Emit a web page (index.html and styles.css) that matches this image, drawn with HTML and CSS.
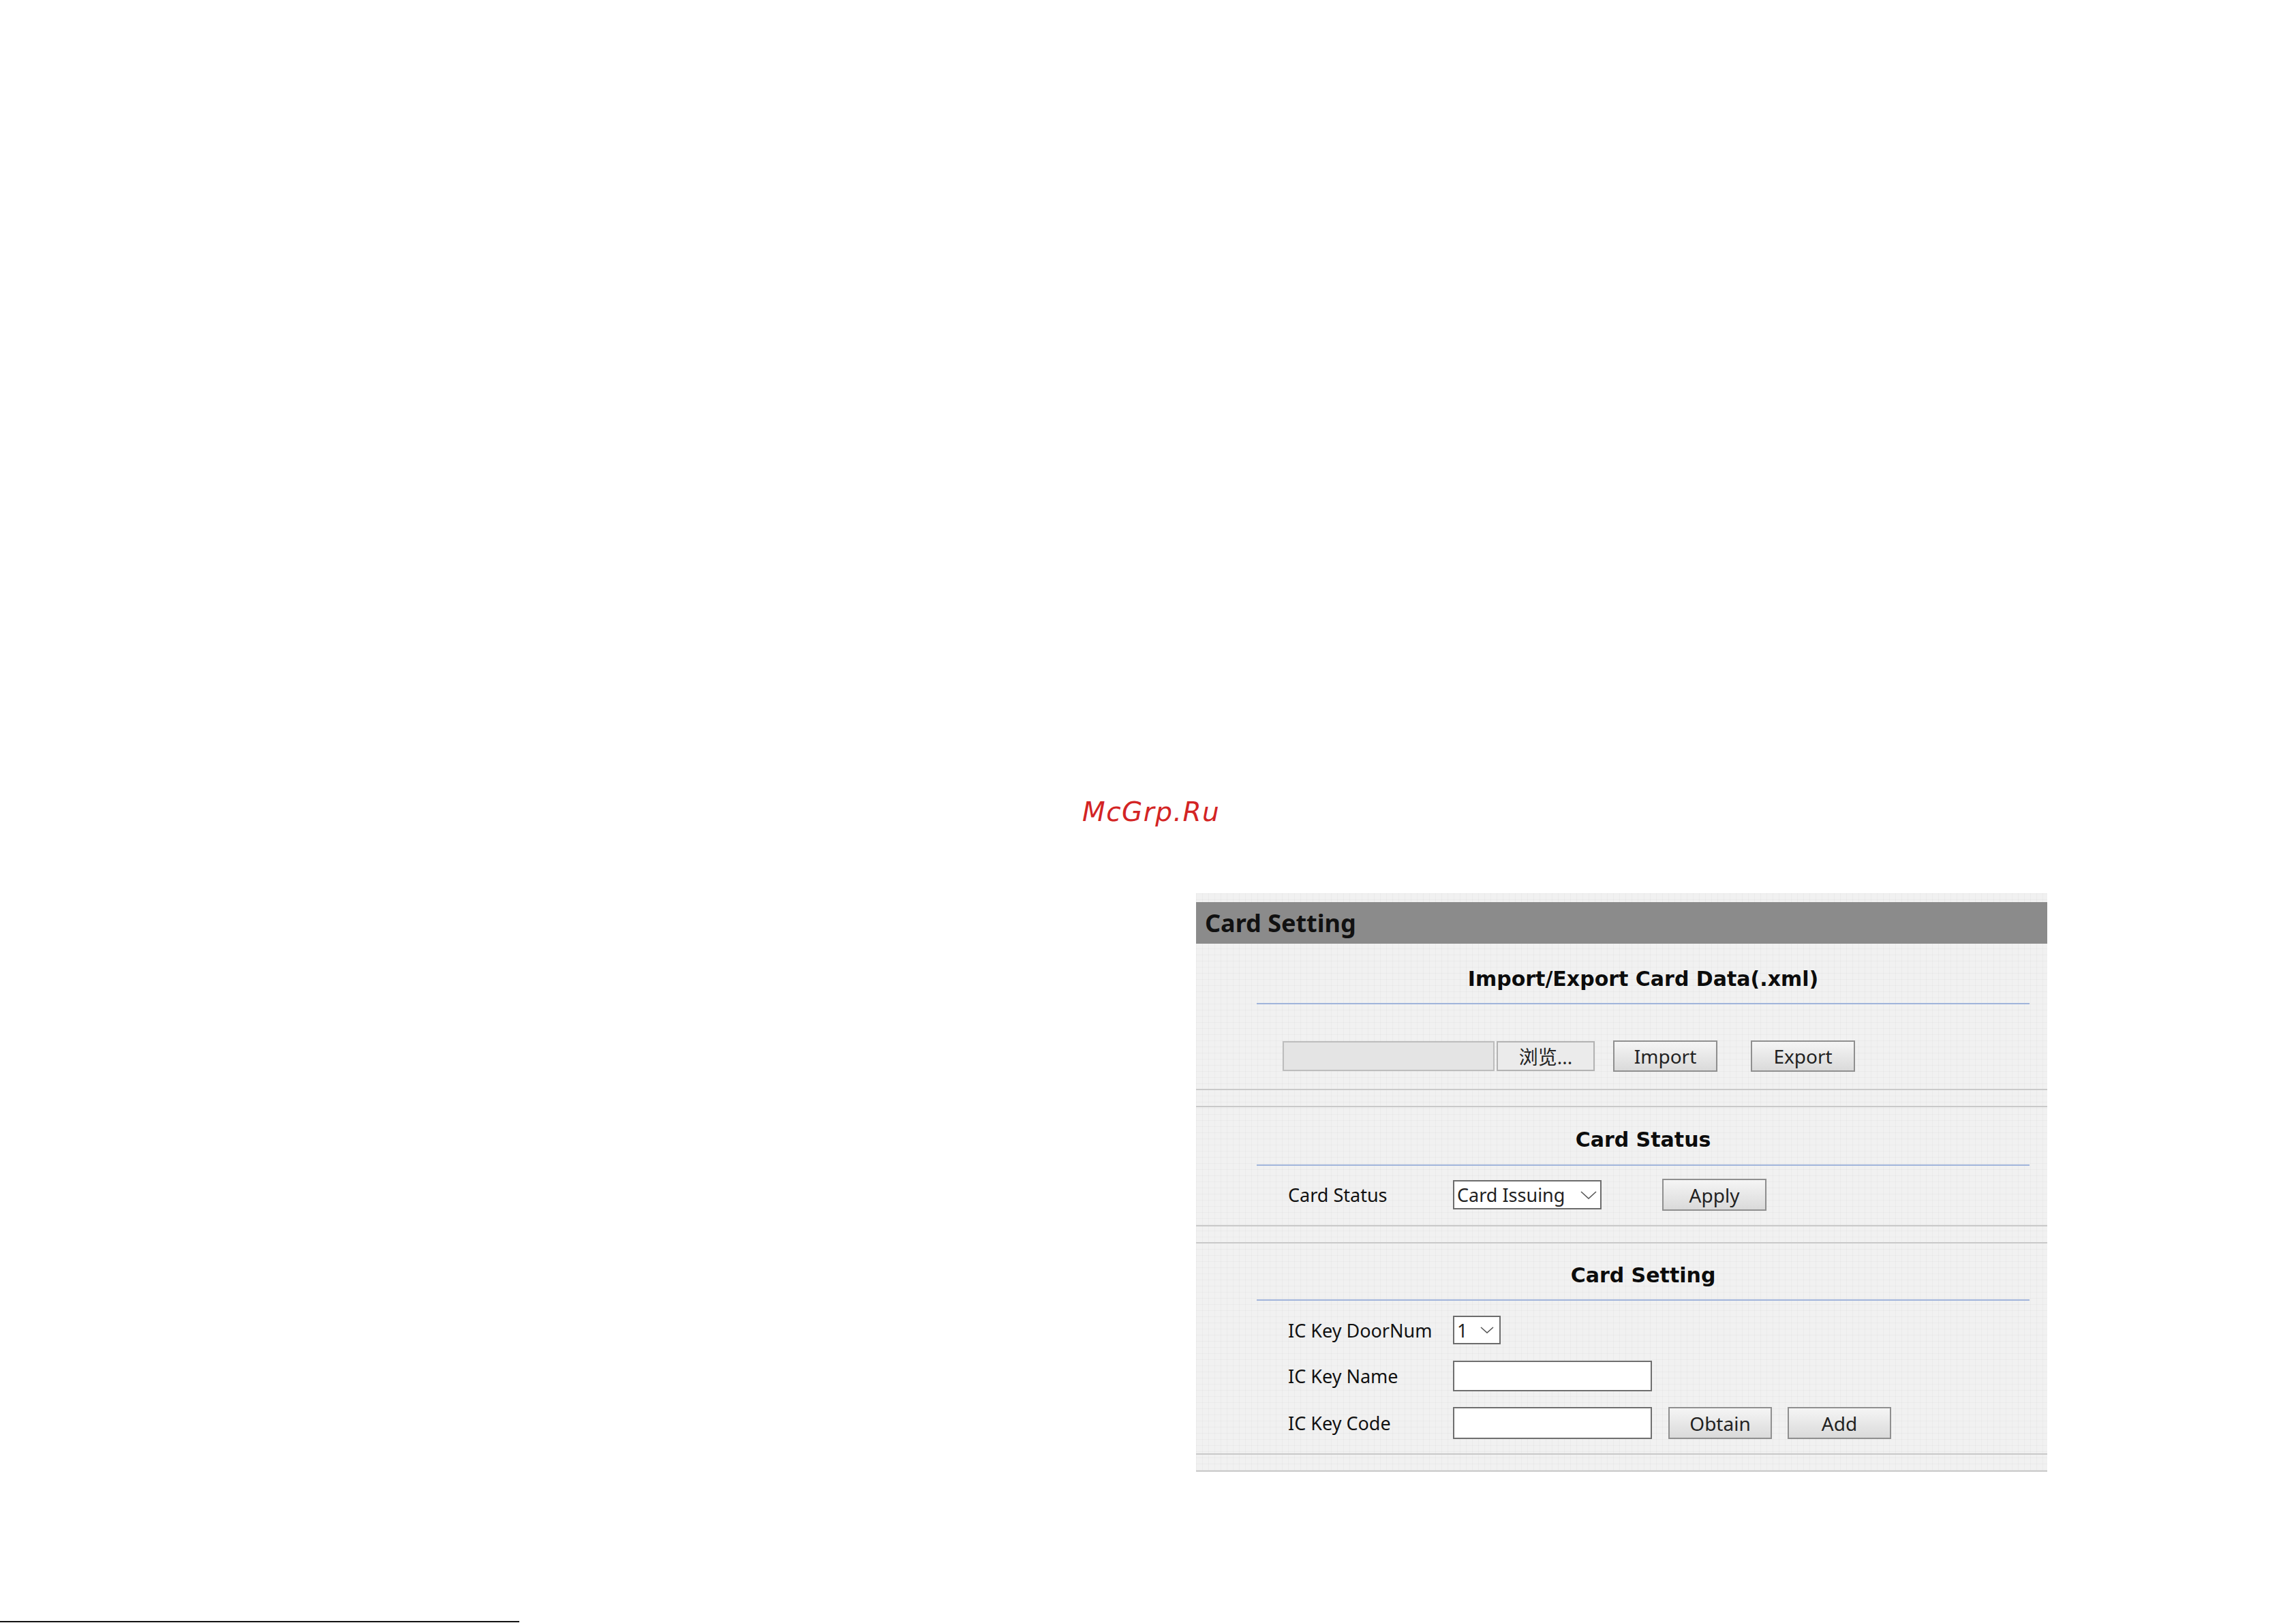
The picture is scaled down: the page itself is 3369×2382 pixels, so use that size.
FILE: index.html
```html
<!DOCTYPE html>
<html lang="en">
<head>
<meta charset="utf-8">
<title>Card Setting</title>
<link rel="stylesheet" href="styles.css">
</head>
<body>
<div class="page">
  <div class="watermark">McGrp.Ru</div>

  <div class="panel">
    <div class="panel-header">Card Setting</div>

    <section class="section section-first">
      <div class="inner">
        <h2 class="heading">Import/Export Card Data(.xml)</h2>
        <div class="rule"></div>
        <div class="file-row">
          <div class="file-picker">
            <div class="file-field"></div>
            <div class="browse-btn">浏览...</div>
          </div>
          <button class="btn btn-import">Import</button>
          <button class="btn btn-export">Export</button>
        </div>
      </div>
    </section>

    <section class="section section-status">
      <div class="inner">
        <h2 class="heading">Card Status</h2>
        <div class="rule rule-status"></div>
        <div class="row row-status">
          <span class="label">Card Status</span>
          <div class="select select-status">
            <span>Card Issuing</span>
            <svg class="chev" width="24" height="12" viewBox="0 0 24 12"><polyline points="1,1 12,11 23,1" fill="none" stroke="#555" stroke-width="1.6"/></svg>
          </div>
          <button class="btn btn-apply">Apply</button>
        </div>
      </div>
    </section>

    <section class="section section-setting">
      <div class="inner">
        <h2 class="heading">Card Setting</h2>
        <div class="rule"></div>
        <div class="form-rows">
          <div class="row row-door">
            <span class="label">IC Key DoorNum</span>
            <div class="select select-door">
              <span>1</span>
              <svg class="chev" width="20" height="10" viewBox="0 0 20 10"><polyline points="1,1 10,9 19,1" fill="none" stroke="#555" stroke-width="1.6"/></svg>
            </div>
          </div>
          <div class="row row-name">
            <span class="label">IC Key Name</span>
            <div class="text-input input-name"></div>
          </div>
          <div class="row row-code">
            <span class="label">IC Key Code</span>
            <div class="text-input input-code"></div>
            <button class="btn btn-obtain">Obtain</button>
            <button class="btn btn-add">Add</button>
          </div>
        </div>
      </div>
    </section>
  </div>

  <div class="footline"></div>
</div>
</body>
</html>
```

FILE: styles.css
```css
* {
  box-sizing: border-box;
}

html, body {
  margin: 0;
  padding: 0;
  background: #ffffff;
}

body {
  width: 3369px;
  height: 2382px;
  overflow: hidden;
  font-family: "Noto Sans", "Liberation Sans", sans-serif;
}

.page {
  padding-top: 1170px;
}

.watermark {
  margin-left: 1588px;
  font-family: "DejaVu Sans", sans-serif;
  font-style: italic;
  font-size: 39px;
  line-height: 44px;
  letter-spacing: 1.5px;
  color: #d32424;
  height: 44px;
}

.panel {
  margin-top: 97px;
  margin-left: 1755px;
  width: 1249px;
  padding-top: 13px;
  background-color: #f1f1f1;
  background-image:
    linear-gradient(rgba(0, 0, 0, 0.022) 1px, transparent 1px),
    linear-gradient(90deg, rgba(0, 0, 0, 0.022) 1px, transparent 1px);
  background-size: 9px 9px;
  border-bottom: 2px solid #c9c9c9;
}

.panel-header {
  height: 61px;
  background: #8b8b8b;
  display: flex;
  align-items: center;
  padding-left: 13px;
  font-family: "Noto Sans", sans-serif;
  font-weight: 700;
  font-size: 36px;
  color: #111111;
}

.section {
  border-top: 2px solid #c9c9c9;
  border-bottom: 2px solid #c9c9c9;
  margin-bottom: 23px;
}

.section-first {
  border-top: none;
  padding-top: 35px;
  padding-bottom: 25px;
}

.section-status {
  padding-top: 31px;
  padding-bottom: 21px;
}

.section-setting {
  padding-top: 30px;
  padding-bottom: 21px;
}

.inner {
  margin-left: 89px;
  margin-right: 26px;
}

.heading {
  margin: 0;
  text-align: center;
  font-family: "DejaVu Sans", sans-serif;
  font-weight: 700;
  font-size: 30px;
  line-height: 34px;
  height: 34px;
  color: #0c0c0c;
}

.rule {
  height: 2px;
  margin-top: 18px;
  background: #a0b4db;
}

.rule-status {
  margin-top: 19px;
}

/* file row */
.file-row {
  margin-top: 53px;
  height: 46px;
  padding-left: 38px;
  display: flex;
  align-items: center;
}

.file-picker {
  display: flex;
  gap: 3px;
  height: 44px;
}

.file-field {
  width: 311px;
  height: 44px;
  background: #e4e4e4;
  border: 2px solid #bdbdbd;
}

.browse-btn {
  width: 144px;
  height: 44px;
  background: #ebebeb;
  border: 2px solid #b3b3b3;
  display: flex;
  align-items: center;
  justify-content: center;
  font-family: "Noto Sans", "Noto Sans CJK SC", sans-serif;
  font-size: 28px;
  color: #222222;
}

.btn {
  height: 46px;
  width: 153px;
  padding: 0;
  background: linear-gradient(#f5f5f5, #dadada);
  border: 2px solid #8f8f8f;
  border-radius: 0;
  font-family: "Noto Sans", sans-serif;
  font-size: 28px;
  color: #222222;
  display: flex;
  align-items: center;
  justify-content: center;
}

.btn-import {
  margin-left: 27px;
}

.btn-export {
  margin-left: 49px;
}

/* form rows */
.row {
  display: flex;
  align-items: center;
  padding-left: 46px;
}

.label {
  width: 242px;
  flex: none;
  font-family: "Noto Sans", sans-serif;
  font-size: 27px;
  color: #111111;
}

.row-status {
  margin-top: 19px;
  height: 47px;
}

.select {
  background: #ffffff;
  border: 2px solid #6c6c6c;
  display: flex;
  align-items: center;
  justify-content: space-between;
  padding-left: 4px;
  font-family: "Noto Sans", sans-serif;
  font-size: 27px;
  color: #222222;
}

.select-status {
  width: 218px;
  height: 43px;
  padding-right: 5px;
}

.select-door {
  width: 70px;
  height: 42px;
  padding-right: 8px;
}

.chev {
  display: block;
  flex: none;
}

.btn-apply {
  margin-left: 89px;
  height: 47px;
}

.form-rows {
  margin-top: 22px;
  display: flex;
  flex-direction: column;
}

.row-door {
  height: 42px;
}

.row-name {
  margin-top: 24px;
  height: 45px;
}

.row-code {
  margin-top: 23px;
  height: 47px;
}

.text-input {
  width: 292px;
  background: #ffffff;
  border: 2px solid #6f6f6f;
}

.input-name {
  height: 45px;
}

.input-code {
  height: 47px;
}

.btn-obtain {
  margin-left: 24px;
  width: 152px;
  height: 47px;
}

.btn-add {
  margin-left: 23px;
  width: 152px;
  height: 47px;
}

.footline {
  margin-top: 219px;
  width: 762px;
  height: 2px;
  background: #111111;
}
```
